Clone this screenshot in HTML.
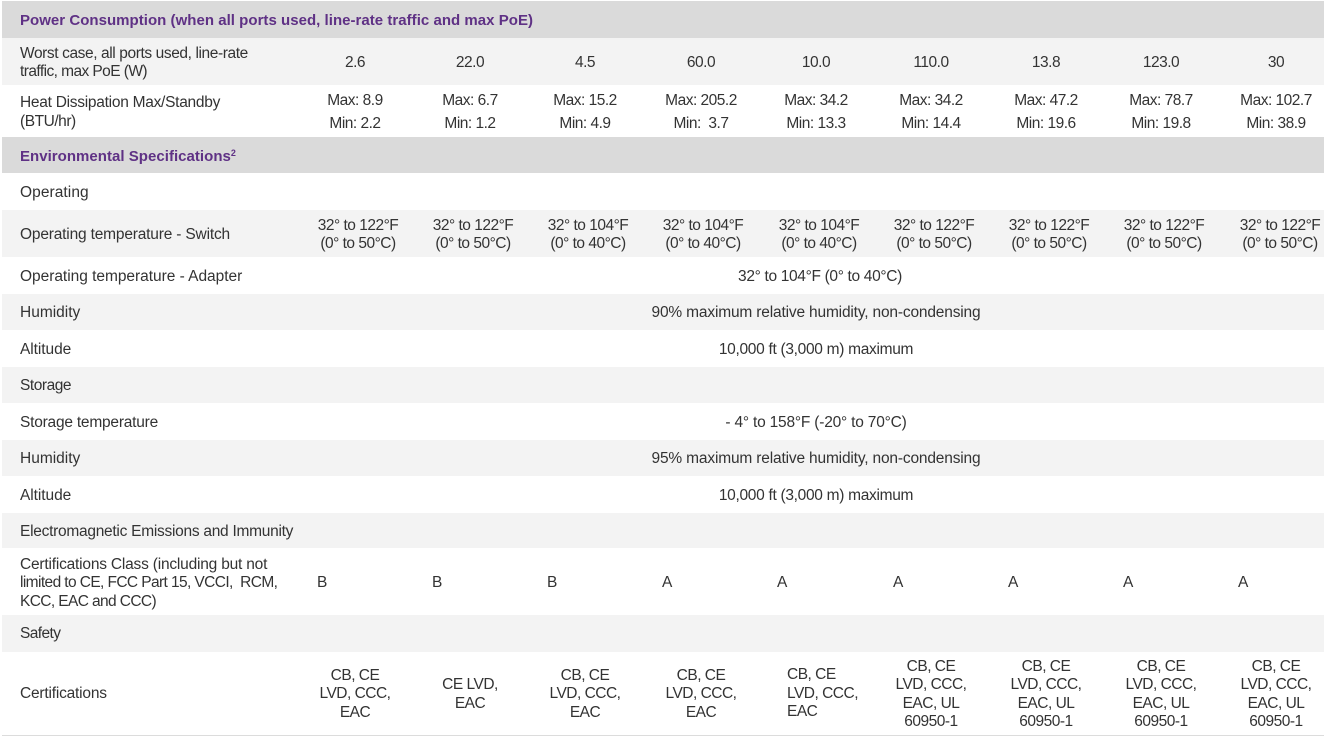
<!DOCTYPE html>
<html lang="en">
<head>
<meta charset="utf-8">
<title>Specifications</title>
<style>
html,body{margin:0;padding:0;background:#fff;}
#p{position:relative;width:1328px;height:736px;overflow:hidden;background:#fff;font-family:"Liberation Sans",sans-serif;font-size:15.5px;letter-spacing:-.5px;color:#333;}
.b{position:absolute;left:2px;width:1322px;}
.g{background:#dadada;}
.f{background:#f3f3f3;}
.h{position:absolute;left:20px;color:#5f3185;font-weight:bold;font-size:15px;letter-spacing:.03px;line-height:18px;white-space:nowrap;margin-top:1px;}
.h sup{font-size:9px;line-height:0;vertical-align:5px;}
.l{position:absolute;left:20px;line-height:18px;white-space:nowrap;margin-top:1px;}
.c{position:absolute;width:120px;text-align:center;line-height:18px;white-space:nowrap;margin-top:1px;}
.w{position:absolute;left:315px;width:1002px;text-align:center;line-height:18px;white-space:nowrap;margin-top:1px;}
.a{position:absolute;line-height:18px;white-space:nowrap;margin-top:1px;}
</style>
</head>
<body>
<div id="p">
<div class="b g" style="top:1px;height:37px"></div>
<div class="b f" style="top:38px;height:47px"></div>
<div class="b g" style="top:137px;height:36px"></div>
<div class="b f" style="top:210px;height:47px"></div>
<div class="b f" style="top:294px;height:36px"></div>
<div class="b f" style="top:367px;height:36px"></div>
<div class="b f" style="top:440px;height:36px"></div>
<div class="b f" style="top:513px;height:35px"></div>
<div class="b f" style="top:615px;height:37px"></div>
<div class="b" style="top:735px;height:1px;background:#dcdcdc"></div>

<div class="h" style="top:11px">Power Consumption (when all ports used, line-rate traffic and max PoE)</div>
<div class="l" style="top:44px;letter-spacing:-.4px">Worst case, all ports used, line-rate</div>
<div class="l" style="top:62px;letter-spacing:-.57px">traffic, max PoE (W)</div>
<div class="c" style="left:295px;top:53px">2.6</div>
<div class="c" style="left:410px;top:53px">22.0</div>
<div class="c" style="left:525px;top:53px">4.5</div>
<div class="c" style="left:641px;top:53px">60.0</div>
<div class="c" style="left:756px;top:53px">10.0</div>
<div class="c" style="left:871px;top:53px">110.0</div>
<div class="c" style="left:986px;top:53px">13.8</div>
<div class="c" style="left:1101px;top:53px">123.0</div>
<div class="c" style="left:1216px;top:53px">30</div>

<div class="l" style="top:93px;letter-spacing:-.27px">Heat Dissipation Max/Standby</div>
<div class="l" style="top:112px;letter-spacing:-.46px">(BTU/hr)</div>
<div class="c" style="left:295px;top:91px">Max: 8.9</div>
<div class="c" style="left:410px;top:91px">Max: 6.7</div>
<div class="c" style="left:525px;top:91px">Max: 15.2</div>
<div class="c" style="left:641px;top:91px">Max: 205.2</div>
<div class="c" style="left:756px;top:91px">Max: 34.2</div>
<div class="c" style="left:871px;top:91px">Max: 34.2</div>
<div class="c" style="left:986px;top:91px">Max: 47.2</div>
<div class="c" style="left:1101px;top:91px">Max: 78.7</div>
<div class="c" style="left:1216px;top:91px">Max: 102.7</div>
<div class="c" style="left:295px;top:114px">Min: 2.2</div>
<div class="c" style="left:410px;top:114px">Min: 1.2</div>
<div class="c" style="left:525px;top:114px">Min: 4.9</div>
<div class="c" style="left:641px;top:114px">Min:&nbsp; 3.7</div>
<div class="c" style="left:756px;top:114px">Min: 13.3</div>
<div class="c" style="left:871px;top:114px">Min: 14.4</div>
<div class="c" style="left:986px;top:114px">Min: 19.6</div>
<div class="c" style="left:1101px;top:114px">Min: 19.8</div>
<div class="c" style="left:1216px;top:114px">Min: 38.9</div>

<div class="h" style="top:147px">Environmental Specifications<sup>2</sup></div>
<div class="l" style="top:183px;letter-spacing:.07px">Operating</div>

<div class="l" style="top:225px;letter-spacing:-.18px">Operating temperature - Switch</div>
<div class="c" style="left:298px;top:216px">32° to 122°F</div>
<div class="c" style="left:413px;top:216px">32° to 122°F</div>
<div class="c" style="left:528px;top:216px">32° to 104°F</div>
<div class="c" style="left:643px;top:216px">32° to 104°F</div>
<div class="c" style="left:759px;top:216px">32° to 104°F</div>
<div class="c" style="left:874px;top:216px">32° to 122°F</div>
<div class="c" style="left:989px;top:216px">32° to 122°F</div>
<div class="c" style="left:1104px;top:216px">32° to 122°F</div>
<div class="c" style="left:1220px;top:216px">32° to 122°F</div>
<div class="c" style="left:298px;top:234px">(0° to 50°C)</div>
<div class="c" style="left:413px;top:234px">(0° to 50°C)</div>
<div class="c" style="left:528px;top:234px">(0° to 40°C)</div>
<div class="c" style="left:643px;top:234px">(0° to 40°C)</div>
<div class="c" style="left:759px;top:234px">(0° to 40°C)</div>
<div class="c" style="left:874px;top:234px">(0° to 50°C)</div>
<div class="c" style="left:989px;top:234px">(0° to 50°C)</div>
<div class="c" style="left:1104px;top:234px">(0° to 50°C)</div>
<div class="c" style="left:1220px;top:234px">(0° to 50°C)</div>

<div class="l" style="top:267px;letter-spacing:-.03px">Operating temperature - Adapter</div>
<div class="w" style="top:267px;left:319px;letter-spacing:-.33px">32° to 104°F (0° to 40°C)</div>
<div class="l" style="top:303px;letter-spacing:0">Humidity</div>
<div class="w" style="top:303px;letter-spacing:-.17px">90% maximum relative humidity, non-condensing</div>
<div class="l" style="top:340px;letter-spacing:-.06px">Altitude</div>
<div class="w" style="top:340px;letter-spacing:-.3px">10,000 ft (3,000 m) maximum</div>
<div class="l" style="top:376px;letter-spacing:-.46px">Storage</div>
<div class="l" style="top:413px;letter-spacing:-.22px">Storage temperature</div>
<div class="w" style="top:413px;letter-spacing:-.2px">- 4° to 158°F (-20° to 70°C)</div>
<div class="l" style="top:449px;letter-spacing:0">Humidity</div>
<div class="w" style="top:449px;letter-spacing:-.17px">95% maximum relative humidity, non-condensing</div>
<div class="l" style="top:486px;letter-spacing:-.06px">Altitude</div>
<div class="w" style="top:486px;letter-spacing:-.3px">10,000 ft (3,000 m) maximum</div>
<div class="l" style="top:522px;letter-spacing:-.27px">Electromagnetic Emissions and Immunity</div>

<div class="l" style="top:555px;letter-spacing:-.2px">Certifications Class (including but not</div>
<div class="l" style="top:573px;letter-spacing:-.6px">limited to CE, FCC Part 15, VCCI,&nbsp; RCM,</div>
<div class="l" style="top:592px;letter-spacing:-.61px">KCC, EAC and CCC)</div>
<div class="a" style="left:317px;top:573px">B</div>
<div class="a" style="left:432px;top:573px">B</div>
<div class="a" style="left:547px;top:573px">B</div>
<div class="a" style="left:662px;top:573px">A</div>
<div class="a" style="left:777px;top:573px">A</div>
<div class="a" style="left:893px;top:573px">A</div>
<div class="a" style="left:1008px;top:573px">A</div>
<div class="a" style="left:1123px;top:573px">A</div>
<div class="a" style="left:1238px;top:573px">A</div>

<div class="l" style="top:624px;letter-spacing:-.6px">Safety</div>
<div class="l" style="top:684px;letter-spacing:-.2px">Certifications</div>

<div class="c" style="left:295px;top:666px">CB, CE</div>
<div class="c" style="left:295px;top:684px">LVD, CCC,</div>
<div class="c" style="left:295px;top:703px">EAC</div>
<div class="c" style="left:410px;top:675px">CE LVD,</div>
<div class="c" style="left:410px;top:694px">EAC</div>
<div class="c" style="left:525px;top:666px">CB, CE</div>
<div class="c" style="left:525px;top:684px">LVD, CCC,</div>
<div class="c" style="left:525px;top:703px">EAC</div>
<div class="c" style="left:641px;top:666px">CB, CE</div>
<div class="c" style="left:641px;top:684px">LVD, CCC,</div>
<div class="c" style="left:641px;top:703px">EAC</div>
<div class="a" style="left:787px;top:665px">CB, CE</div>
<div class="a" style="left:787px;top:684px">LVD, CCC,</div>
<div class="a" style="left:787px;top:702px">EAC</div>
<div class="c" style="left:871px;top:657px">CB, CE</div>
<div class="c" style="left:871px;top:675px">LVD, CCC,</div>
<div class="c" style="left:871px;top:694px">EAC, UL</div>
<div class="c" style="left:871px;top:712px">60950-1</div>
<div class="c" style="left:986px;top:657px">CB, CE</div>
<div class="c" style="left:986px;top:675px">LVD, CCC,</div>
<div class="c" style="left:986px;top:694px">EAC, UL</div>
<div class="c" style="left:986px;top:712px">60950-1</div>
<div class="c" style="left:1101px;top:657px">CB, CE</div>
<div class="c" style="left:1101px;top:675px">LVD, CCC,</div>
<div class="c" style="left:1101px;top:694px">EAC, UL</div>
<div class="c" style="left:1101px;top:712px">60950-1</div>
<div class="c" style="left:1216px;top:657px">CB, CE</div>
<div class="c" style="left:1216px;top:675px">LVD, CCC,</div>
<div class="c" style="left:1216px;top:694px">EAC, UL</div>
<div class="c" style="left:1216px;top:712px">60950-1</div>
</div>
</body>
</html>
